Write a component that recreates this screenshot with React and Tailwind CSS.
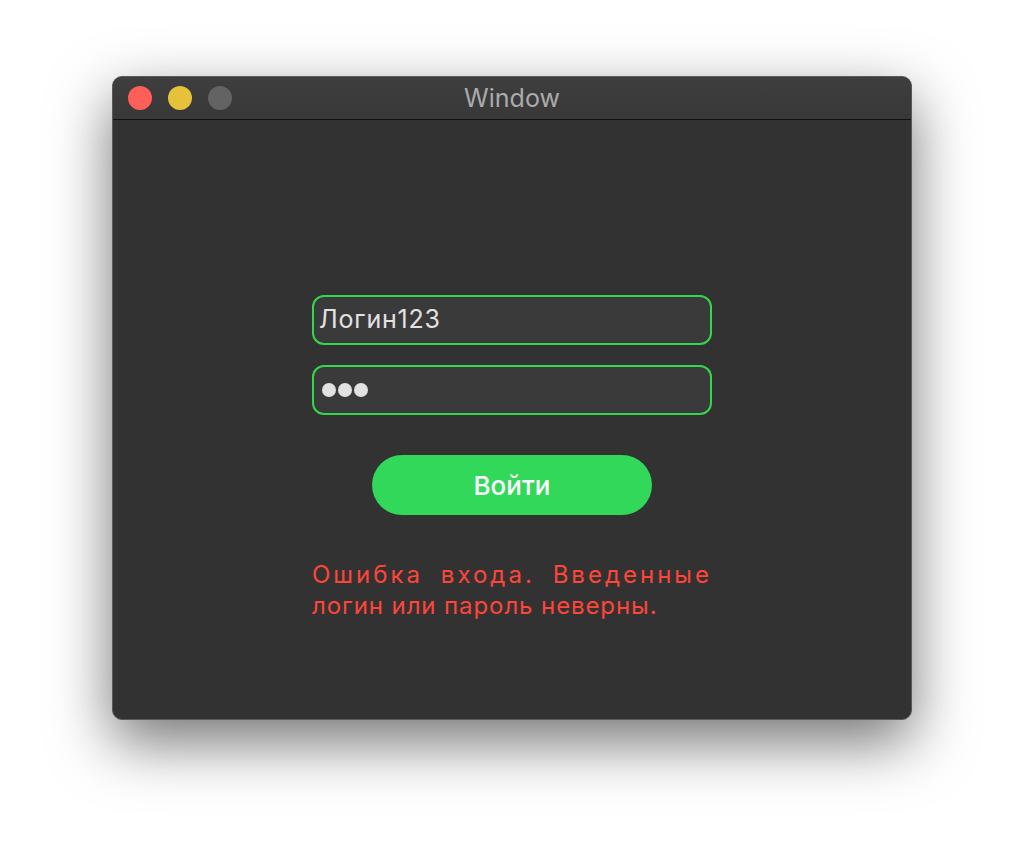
import React from 'react';

const font = { fontFamily: 'Inter, "Noto Sans", sans-serif' };

export default function App() {
  return (
    <div className="min-h-[868px] w-full bg-white flex justify-center pt-[76px]" style={font}>
      {/* Window */}
      <div className="w-[800px] h-[644px] rounded-[10px] border border-[#5a5a5a] bg-[#323232] overflow-hidden flex flex-col shadow-[0_22px_60px_rgba(0,0,0,0.55)]">
        {/* Title bar */}
        <div className="relative h-[43px] shrink-0 bg-gradient-to-b from-[#3e3e3e] to-[#383838] border-b border-[#111] flex items-center px-[15px] gap-[16px]">
          <span className="w-[24px] h-[24px] rounded-full bg-[#fe5f57]" />
          <span className="w-[24px] h-[24px] rounded-full bg-[#e6c23b]" />
          <span className="w-[24px] h-[24px] rounded-full bg-[#636363]" />
          <div className="absolute inset-0 flex items-center justify-center pt-[2px] text-[25px] text-[#ababab] pointer-events-none">
            Window
          </div>
        </div>

        {/* Content */}
        <div className="flex-1 flex flex-col items-center pt-[175px]">
          <div className="w-[400px] h-[50px] rounded-[12px] border-2 border-[#32d74b] bg-[#3a3a3a] flex items-center px-[5px] text-[25px] tracking-[0.8px] text-[#e2e2e2]">
            Логин123
          </div>
          <div className="mt-[20px] w-[400px] h-[50px] rounded-[12px] border-2 border-[#32d74b] bg-[#3a3a3a] flex items-center gap-[2px] px-[8px]">
            <span className="w-[14px] h-[14px] rounded-full bg-[#e2e2e2]" />
            <span className="w-[14px] h-[14px] rounded-full bg-[#e2e2e2]" />
            <span className="w-[14px] h-[14px] rounded-full bg-[#e2e2e2]" />
          </div>

          <button className="mt-[40px] w-[280px] h-[60px] rounded-full bg-[#32d85a] text-white text-[26px] font-medium">
            Войти
          </button>

          <div className="mt-[44px] w-[400px] text-[24px] leading-[31px] text-[#ff453a]">
            <p className="tracking-[3px] text-justify [text-align-last:justify]">Ошибка входа. Введенные</p>
            <p className="tracking-[0.9px]">логин или пароль неверны.</p>
          </div>
        </div>
      </div>
    </div>
  );
}
